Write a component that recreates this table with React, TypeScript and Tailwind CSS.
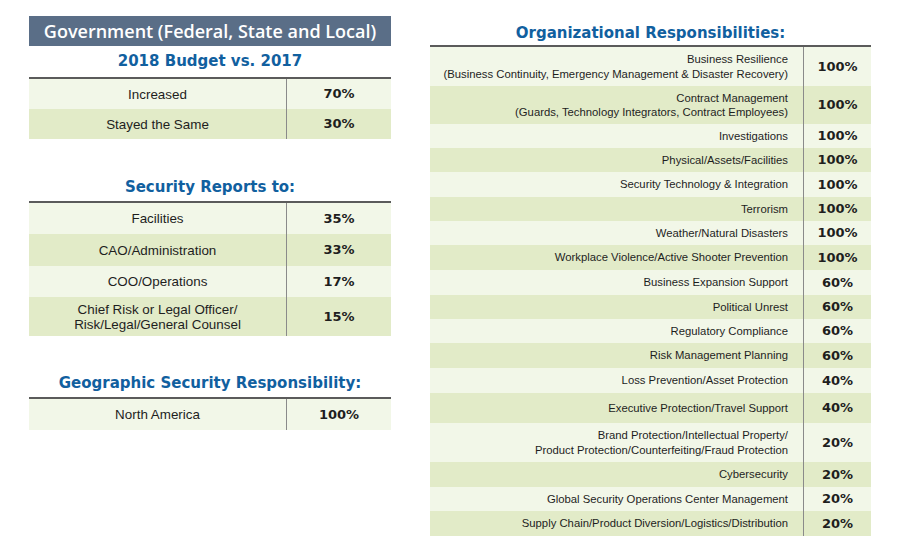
import React from "react";

type Row = { label: React.ReactNode; value: string; h: string };

const budget: Row[] = [
  { label: "Increased", value: "70%", h: "h-[30px]" },
  { label: "Stayed the Same", value: "30%", h: "h-[30px]" },
];

const reports: Row[] = [
  { label: "Facilities", value: "35%", h: "h-[31px]" },
  { label: "CAO/Administration", value: "33%", h: "h-[32px]" },
  { label: "COO/Operations", value: "17%", h: "h-[31px]" },
  {
    label: (
      <>
        Chief Risk or Legal Officer/
        <br />
        Risk/Legal/General Counsel
      </>
    ),
    value: "15%",
    h: "h-[39px]",
  },
];

const geo: Row[] = [{ label: "North America", value: "100%", h: "h-[31px]" }];

const org: Row[] = [
  {
    label: (
      <>
        Business Resilience
        <br />
        (Business Continuity, Emergency Management &amp; Disaster Recovery)
      </>
    ),
    value: "100%",
    h: "h-[39px]",
  },
  {
    label: (
      <>
        Contract Management
        <br />
        (Guards, Technology Integrators, Contract Employees)
      </>
    ),
    value: "100%",
    h: "h-[38px]",
  },
  { label: "Investigations", value: "100%", h: "h-[24px]" },
  { label: "Physical/Assets/Facilities", value: "100%", h: "h-[24px]" },
  { label: "Security Technology & Integration", value: "100%", h: "h-[25px]" },
  { label: "Terrorism", value: "100%", h: "h-[24px]" },
  { label: "Weather/Natural Disasters", value: "100%", h: "h-[24px]" },
  { label: "Workplace Violence/Active Shooter Prevention", value: "100%", h: "h-[25px]" },
  { label: "Business Expansion Support", value: "60%", h: "h-[25px]" },
  { label: "Political Unrest", value: "60%", h: "h-[24px]" },
  { label: "Regulatory Compliance", value: "60%", h: "h-[24px]" },
  { label: "Risk Management Planning", value: "60%", h: "h-[25px]" },
  { label: "Loss Prevention/Asset Protection", value: "40%", h: "h-[25px]" },
  { label: "Executive Protection/Travel Support", value: "40%", h: "h-[30px]" },
  {
    label: (
      <>
        Brand Protection/Intellectual Property/
        <br />
        Product Protection/Counterfeiting/Fraud Protection
      </>
    ),
    value: "20%",
    h: "h-[39px]",
  },
  { label: "Cybersecurity", value: "20%", h: "h-[25px]" },
  { label: "Global Security Operations Center Management", value: "20%", h: "h-[24px]" },
  { label: "Supply Chain/Product Diversion/Logistics/Distribution", value: "20%", h: "h-[25px]" },
];

const titleFont = "font-['DejaVu_Sans',sans-serif] font-bold text-[#11609f]";
const pctFont = "font-['DejaVu_Sans',sans-serif] font-bold text-[13px] text-[#1e1e1e]";
const labelFont = "font-['Liberation_Sans',Arial,sans-serif] text-[#1e1e1e]";

function LeftTable({ rows }: { rows: Row[] }) {
  return (
    <div className="border-t-2 border-[#5b5b5b]">
      {rows.map((r, i) => (
        <div key={i} className={`flex ${r.h} ${i % 2 === 0 ? "bg-[#f2f7e8]" : "bg-[#e2ebc8]"}`}>
          <div className={`w-[257px] flex items-center justify-center text-center leading-[15px] text-[13.4px] ${labelFont}`}>
            {r.label}
          </div>
          <div className={`flex-1 border-l border-[#8a8a8a] flex items-center justify-center ${pctFont}`}>
            {r.value}
          </div>
        </div>
      ))}
    </div>
  );
}

function SectionTitle({ children, className }: { children: React.ReactNode; className: string }) {
  return <div className={`flex items-center justify-center text-[15px] ${titleFont} ${className}`}>{children}</div>;
}

export default function App() {
  return (
    <div className="w-[900px] h-[550px] bg-white flex">
      <div className="ml-[29px] w-[362px] pt-[16px]">
        <div className="h-[30px] bg-[#5a6e87] flex items-center justify-center text-white text-[18px] font-semibold font-['Open_Sans',sans-serif]">
          Government (Federal, State and Local)
        </div>
        <SectionTitle className="h-[31px]">2018 Budget vs. 2017</SectionTitle>
        <LeftTable rows={budget} />
        <SectionTitle className="h-[27px] mt-[35px]">Security Reports to:</SectionTitle>
        <LeftTable rows={reports} />
        <SectionTitle className="h-[27px] mt-[34px]">Geographic Security Responsibility:</SectionTitle>
        <LeftTable rows={geo} />
      </div>

      <div className="ml-[39px] w-[441px] pt-[22px]">
        <SectionTitle className="h-[23px]">Organizational Responsibilities:</SectionTitle>
        <div className="border-t-2 border-[#5b5b5b]">
          {org.map((r, i) => (
            <div key={i} className={`flex ${r.h} ${i % 2 === 0 ? "bg-[#f2f7e8]" : "bg-[#e2ebc8]"}`}>
              <div className={`w-[373px] pr-[15px] flex items-center justify-end text-right leading-[14.5px] text-[11.3px] ${labelFont}`}>
                <div>{r.label}</div>
              </div>
              <div className={`flex-1 border-l border-[#8a8a8a] flex items-center justify-center ${pctFont}`}>
                {r.value}
              </div>
            </div>
          ))}
        </div>
      </div>
    </div>
  );
}
